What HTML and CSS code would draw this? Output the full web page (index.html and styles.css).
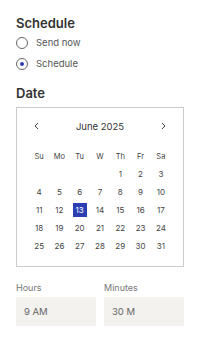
FILE: index.html
```html
<!DOCTYPE html>
<html lang="en">
<head>
    <meta charset="UTF-8">
    <meta name="viewport" content="width=device-width, initial-scale=1.0">
    <title>Schedule</title>
    <link rel="stylesheet" href="styles.css">
</head>
<body>
    <h2 class="section-title">Schedule</h2>
    <div class="radio-list">
        <label class="radio-row"><span class="radio"></span>Send now</label>
        <label class="radio-row"><span class="radio checked"></span>Schedule</label>
    </div>

    <h2 class="section-title date-title">Date</h2>
    <div class="calendar">
        <div class="cal-head">
            <svg width="5" height="8" viewBox="0 0 5 8"><path d="M4 1 L1 4 L4 7" fill="none" stroke="#444" stroke-width="1"/></svg>
            <span class="month">June 2025</span>
            <svg width="5" height="8" viewBox="0 0 5 8"><path d="M1 1 L4 4 L1 7" fill="none" stroke="#444" stroke-width="1"/></svg>
        </div>
        <div class="cal-grid">
            <span class="wd">Su</span><span class="wd">Mo</span><span class="wd">Tu</span><span class="wd">W</span><span class="wd">Th</span><span class="wd">Fr</span><span class="wd">Sa</span>
            <span></span><span></span><span></span><span></span><span>1</span><span>2</span><span>3</span>
            <span>4</span><span>5</span><span>6</span><span>7</span><span>8</span><span>9</span><span>10</span>
            <span>11</span><span>12</span><span><b class="selected">13</b></span><span>14</span><span>15</span><span>16</span><span>17</span>
            <span>18</span><span>19</span><span>20</span><span>21</span><span>22</span><span>23</span><span>24</span>
            <span>25</span><span>26</span><span>27</span><span>28</span><span>29</span><span>30</span><span>31</span>
        </div>
    </div>

    <div class="time-row">
        <div class="time-field">
            <label>Hours</label>
            <div class="time-input">9 AM</div>
        </div>
        <div class="time-field">
            <label>Minutes</label>
            <div class="time-input">30 M</div>
        </div>
    </div>
</body>
</html>
```

FILE: styles.css
```css
* {
    box-sizing: border-box;
    margin: 0;
    padding: 0;
}

body {
    background: white;
    padding: 0 16px;
    font-family: Inter, 'Noto Sans', sans-serif;
    color: #333;
}

.section-title {
    padding-top: 15px;
    font-size: 13px;
    line-height: 16px;
    font-weight: 600;
    color: #333;
}

.date-title {
    padding-top: 11px;
}

.radio-list {
    margin-top: 1px;
}

.radio-row {
    display: flex;
    align-items: center;
    height: 21px;
    font-size: 9.5px;
    color: #555;
}

.radio {
    width: 12px;
    height: 12px;
    border: 1px solid #666;
    border-radius: 50%;
    margin-right: 8px;
    display: flex;
    align-items: center;
    justify-content: center;
}

.radio.checked::after {
    content: '';
    width: 4px;
    height: 4px;
    border-radius: 50%;
    background: #2b3fb3;
}

.calendar {
    margin-top: 6px;
    height: 160px;
    border: 1px solid #ccc;
    padding: 9px 12px 0;
}

.cal-head {
    height: 18px;
    display: flex;
    align-items: center;
    justify-content: space-between;
    padding: 0 5px;
}

.month {
    font-size: 9.5px;
    color: #333;
}

.cal-grid {
    margin-top: 12px;
    display: grid;
    grid-template-columns: repeat(7, 1fr);
    grid-auto-rows: 18px;
    font-size: 8px;
    color: #444;
}

.cal-grid span {
    display: flex;
    align-items: center;
    justify-content: center;
}

.cal-grid .wd {
    font-size: 7.5px;
}

.selected {
    width: 14px;
    height: 14px;
    line-height: 14px;
    text-align: center;
    font-weight: 400;
    background: #2b3fb3;
    color: white;
}

.time-row {
    margin-top: 15px;
    display: flex;
    gap: 8px;
}

.time-field {
    flex: 1;
}

.time-field label {
    display: block;
    font-size: 9px;
    line-height: 12px;
    color: #777;
    margin-bottom: 3px;
}

.time-input {
    height: 29px;
    line-height: 29px;
    padding-left: 8px;
    background: #f3f2ee;
    font-size: 9.5px;
    color: #666;
}
```
